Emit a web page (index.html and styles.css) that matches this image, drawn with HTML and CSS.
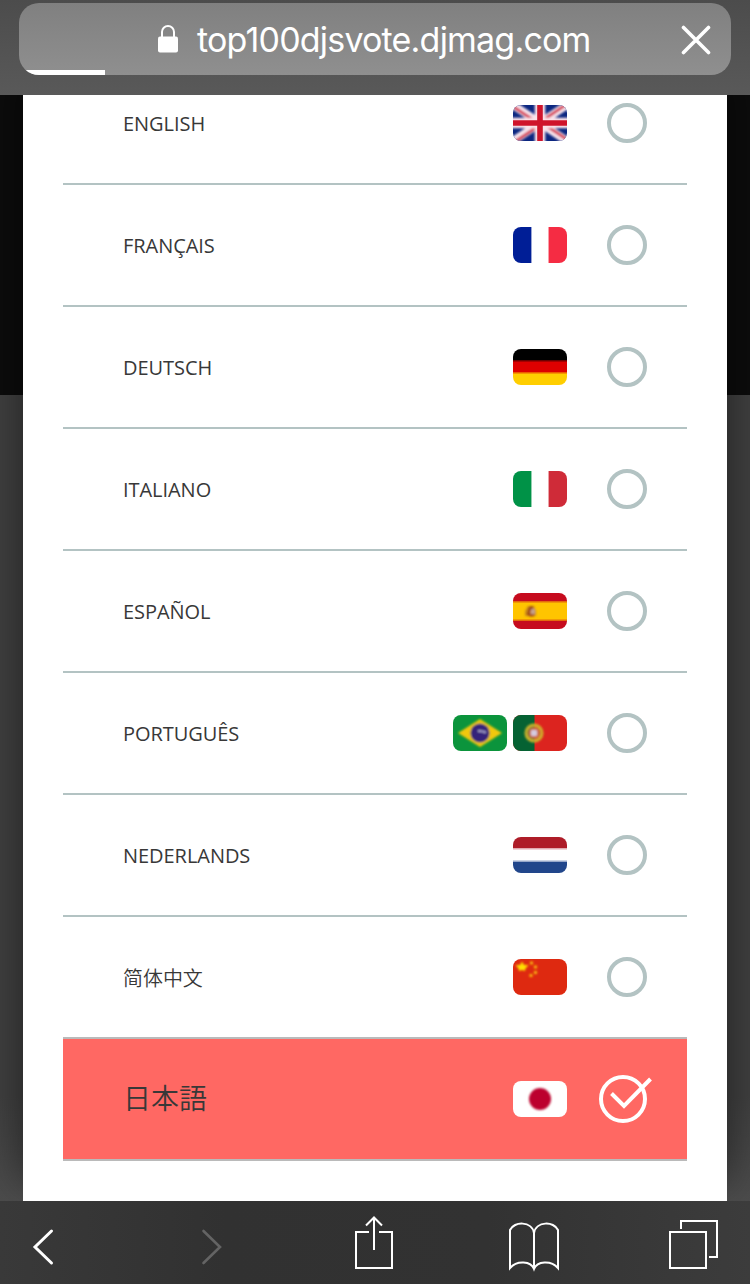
FILE: index.html
```html
<!DOCTYPE html>
<html lang="en">
<head>
    <meta charset="UTF-8">
    <meta name="viewport" content="width=device-width, initial-scale=1.0">
    <title>Select your language</title>
    <link rel="stylesheet" href="styles.css">
</head>
<body>
    <header class="browser-top">
        <div class="address-bar">
            <svg class="lock" viewBox="0 0 20 28">
                <path d="M4 12 V7 a6 6 0 0 1 12 0 V12" fill="none" stroke="#fff" stroke-width="2"/>
                <rect y="11.5" width="20" height="16" rx="2" fill="#fff"/>
            </svg>
            <span class="url">top100djsvote.djmag.com</span>
            <svg class="stop" viewBox="0 0 30 30">
                <path d="M2.5 2.5 L27.5 27.5 M27.5 2.5 L2.5 27.5" stroke="#fff" stroke-width="3.6" stroke-linecap="round"/>
            </svg>
            <div class="progress"></div>
        </div>
    </header>

    <main class="page">
        <div class="modal">
            <ul class="languages">
                <li class="language">
                    <span class="name">ENGLISH</span>
                    <svg class="flag" viewBox="0 0 54 36">
                        <defs>
                            <filter id="soft" x="-30%" y="-30%" width="160%" height="160%"><feGaussianBlur stdDeviation="0.8"/></filter>
                        </defs>
                        <rect width="54" height="36" fill="#0b2680"/>
                        <g filter="url(#soft)">
                            <path d="M-6 -4 L60 40 M60 -4 L-6 40" stroke="#f7e4ec" stroke-width="8"/>
                            <path d="M0 1.5 L27 19.5 M27 16.5 L54 34.5 M54 -1 L27 17 M27 20 L0 38" stroke="#d63c54" stroke-width="3"/>
                            <path d="M27 -6 V42 M-6 18 H60" stroke="#fbe3e9" stroke-width="10.5"/>
                        </g>
                        <path d="M27 0 V36 M0 18 H54" stroke="#cf142b" stroke-width="5.6"/>
                    </svg>
                    <span class="radio"></span>
                </li>
                <li class="language">
                    <span class="name">FRANÇAIS</span>
                    <svg class="flag" viewBox="0 0 54 36">
                        <rect width="54" height="36" fill="#fff"/>
                        <rect width="18" height="36" fill="#001e96"/>
                        <rect x="18" width="1" height="36" fill="#9aa5d4"/>
                        <rect x="36" width="18" height="36" fill="#f52c43"/>
                        <rect x="35" width="1" height="36" fill="#f9a0aa"/>
                    </svg>
                    <span class="radio"></span>
                </li>
                <li class="language">
                    <span class="name">DEUTSCH</span>
                    <svg class="flag" viewBox="0 0 54 36">
                        <rect width="54" height="12" fill="#000"/>
                        <rect y="11" width="54" height="2" fill="#6d0000"/>
                        <rect y="12.5" width="54" height="12" fill="#de0000"/>
                        <rect y="24" width="54" height="12" fill="#ffce00"/>
                        <rect y="23" width="54" height="1.5" fill="#ed5d00"/>
                    </svg>
                    <span class="radio"></span>
                </li>
                <li class="language">
                    <span class="name">ITALIANO</span>
                    <svg class="flag" viewBox="0 0 54 36">
                        <rect width="54" height="36" fill="#fff"/>
                        <rect width="18" height="36" fill="#009247"/>
                        <rect x="18" width="1" height="36" fill="#93cfaf"/>
                        <rect x="36" width="18" height="36" fill="#cf2b38"/>
                        <rect x="35" width="1" height="36" fill="#eba3a8"/>
                    </svg>
                    <span class="radio"></span>
                </li>
                <li class="language">
                    <span class="name">ESPAÑOL</span>
                    <svg class="flag" viewBox="0 0 54 36">
                        <rect width="54" height="36" fill="#c60b1e"/>
                        <rect y="8" width="54" height="20" fill="#e36a0d"/>
                        <rect y="9.5" width="54" height="17" fill="#ffc400"/>
                        <g filter="url(#soft)">
                            <path d="M12 23 V18 L15 13 H21 L23 18 V23 Z" fill="#c9871f"/>
                            <path d="M14 22 L16 14 L20 13 V16 L17 18 V23 Z" fill="#9b3e12"/>
                            <rect x="18" y="16" width="4" height="5" fill="#c4a08b"/>
                            <rect x="16" y="21" width="5" height="2.5" fill="#a34a16"/>
                        </g>
                    </svg>
                    <span class="radio"></span>
                </li>
                <li class="language">
                    <span class="name">PORTUGUÊS</span>
                    <svg class="flag" viewBox="0 0 54 36">
                        <rect width="54" height="36" fill="#0b943c"/>
                        <g filter="url(#soft)">
                            <path d="M27 4 L49 18 L27 32 L5 18 Z" fill="#f0c808"/>
                            <circle cx="27" cy="18" r="9.6" fill="#34207a"/>
                            <path d="M25 16 Q29 15.8 33 17.5" stroke="#a7a2cc" stroke-width="2" fill="none"/>
                        </g>
                    </svg>
                    <svg class="flag" viewBox="0 0 54 36">
                        <rect width="54" height="36" fill="#dc241f"/>
                        <rect width="21.5" height="36" fill="#056233"/>
                        <g filter="url(#soft)">
                            <circle cx="21" cy="18" r="8" fill="none" stroke="#cfb32b" stroke-width="3"/>
                            <circle cx="21" cy="18" r="6" fill="#c9683f"/>
                            <rect x="18" y="15" width="6" height="6" rx="1" fill="#d5cbe0"/>
                        </g>
                    </svg>
                    <span class="radio"></span>
                </li>
                <li class="language">
                    <span class="name">NEDERLANDS</span>
                    <svg class="flag" viewBox="0 0 54 36">
                        <rect width="54" height="36" fill="#fff"/>
                        <rect width="54" height="11" fill="#ae1c28"/>
                        <rect y="11" width="54" height="1.5" fill="#e1a9af"/>
                        <rect y="24.5" width="54" height="11.5" fill="#21468b"/>
                        <rect y="23.5" width="54" height="1.5" fill="#98a8ca"/>
                    </svg>
                    <span class="radio"></span>
                </li>
                <li class="language before-selected">
                    <span class="name" lang="zh-CN">简体中文</span>
                    <svg class="flag" viewBox="0 0 54 36">
                        <rect width="54" height="36" fill="#de2910"/>
                        <g filter="url(#soft)">
                            <path d="M9 2.5 L11 6 H15.5 L12.5 9.5 L12 12 L9 11 L6 12 L5.5 9.5 L2.5 6 H7 Z" fill="#ffe000"/>
                            <circle cx="18.5" cy="4" r="1.7" fill="#f8b90a"/>
                            <circle cx="22.5" cy="8" r="1.7" fill="#f8b90a"/>
                            <circle cx="22.5" cy="13.5" r="1.7" fill="#f8b90a"/>
                            <circle cx="18" cy="16.5" r="1.7" fill="#f8b90a"/>
                        </g>
                    </svg>
                    <span class="radio"></span>
                </li>
                <li class="language selected">
                    <span class="name" lang="ja">日本語</span>
                    <svg class="flag" viewBox="0 0 54 36">
                        <rect width="54" height="36" fill="#fff"/>
                        <circle cx="27" cy="18" r="11" fill="#bc002d" filter="url(#soft)"/>
                    </svg>
                    <svg class="check" viewBox="0 0 48 48">
                        <circle cx="24" cy="24" r="22"/>
                        <path d="M12.5 18.5 L25 31 L51.5 4"/>
                    </svg>
                </li>
            </ul>
        </div>
    </main>

    <footer class="toolbar">
        <svg class="icon back" viewBox="0 0 56 83">
            <path d="M36.5 30 L20 46 L36.5 62" stroke-width="3" stroke-linecap="round"/>
        </svg>
        <svg class="icon forward" viewBox="0 0 56 83">
            <path d="M19.5 30 L36 46 L19.5 62" stroke-width="2.6" stroke-linecap="round"/>
        </svg>
        <svg class="icon" viewBox="0 0 56 83">
            <path d="M23 31 H10 V67 H46 V31 H33 M28 17 V49"/>
            <path d="M20 24.5 L28 16.5 L36 24.5"/>
        </svg>
        <svg class="icon" viewBox="0 0 56 83">
            <path d="M28 68 V32 C26 20 8 20 4 29 V67 C11 59 25 60 28 68 C31 60 45 59 52 67 V29 C48 20 30 20 28 32"/>
        </svg>
        <svg class="icon" viewBox="0 0 56 83">
            <path d="M4 31 H40 V67 H4 Z M15 28 V20 H51 V56 H43"/>
        </svg>
    </footer>
</body>
</html>
```

FILE: styles.css
```css
* {
    margin: 0;
    padding: 0;
    box-sizing: border-box;
}

body {
    display: flex;
    flex-direction: column;
    height: 1284px;
    overflow: hidden;
    font-family: 'Open Sans', 'Noto Sans CJK JP', sans-serif;
    background: #333;
}

/* Browser address bar */
.browser-top {
    height: 95px;
    padding: 3px 19px 20px;
    background: linear-gradient(#4c4c4c, #595959);
}

.address-bar {
    position: relative;
    display: flex;
    align-items: center;
    height: 72px;
    padding: 0 20px 0 139px;
    border-radius: 20px;
    overflow: hidden;
    background: linear-gradient(#808080, #8f8f8f);
}

.lock {
    width: 20px;
    height: 28px;
    margin-right: 19px;
}

.url {
    flex: 1;
    font-family: Inter, sans-serif;
    font-size: 34px;
    letter-spacing: -0.8px;
    white-space: nowrap;
    color: #fff;
}

.stop {
    width: 30px;
    height: 30px;
    margin-top: 2px;
}

.progress {
    position: absolute;
    left: 0;
    bottom: 0;
    width: 86px;
    height: 5px;
    background: #fff;
}

/* Page behind the modal */
.page {
    height: 1106px;
    padding: 0 23px;
    overflow: hidden;
    background: linear-gradient(#0c0c0c 300px, #404040 300px, #404040 1000px, #4c4c4c);
}

.modal {
    display: flow-root;
    height: 1106px;
    padding: 0 40px;
    background: #fff;
    box-shadow: 0 -20px 40px rgba(0, 0, 0, 0.5);
}

.languages {
    list-style: none;
    margin-top: -32px;
}

.language {
    display: flex;
    align-items: center;
    height: 122px;
    padding: 0 40px 0 60px;
    border-bottom: 2px solid #b3c3c3;
}

.name {
    flex: 1;
    font-size: 20px;
    letter-spacing: -0.05px;
    color: #383838;
}

.name:lang(zh-CN) {
    font-family: 'Noto Sans CJK SC', sans-serif;
    font-weight: 350;
}

.flag {
    width: 54px;
    height: 36px;
    margin-left: 6px;
    border-radius: 8px;
    overflow: hidden;
}

.radio {
    width: 40px;
    height: 40px;
    margin-left: 40px;
    border: 4px solid #b3c3c3;
    border-radius: 50%;
}

.before-selected {
    border-bottom-color: #bababa;
}

.selected {
    background: #ff6863;
    border-bottom-color: #bababa;
}

.selected .name {
    padding-bottom: 5px;
    font-family: 'Noto Sans CJK JP', sans-serif;
    font-size: 28px;
    font-weight: 350;
}

.check {
    width: 48px;
    height: 48px;
    margin-left: 32px;
    overflow: visible;
    fill: none;
    stroke: #fff;
    stroke-width: 4;
}

/* Browser toolbar */
.toolbar {
    display: flex;
    gap: 104px;
    height: 83px;
    padding-left: 15px;
    background: linear-gradient(90deg, #393939, #313131 30%, #323232 65%, #3c3c3c);
}

.icon {
    flex: none;
    width: 56px;
    height: 83px;
    fill: none;
    stroke: #fff;
    stroke-width: 2;
}

.back {
    margin-right: 9px;
}

.forward {
    margin-right: 2px;
    stroke: #646464;
}
```
